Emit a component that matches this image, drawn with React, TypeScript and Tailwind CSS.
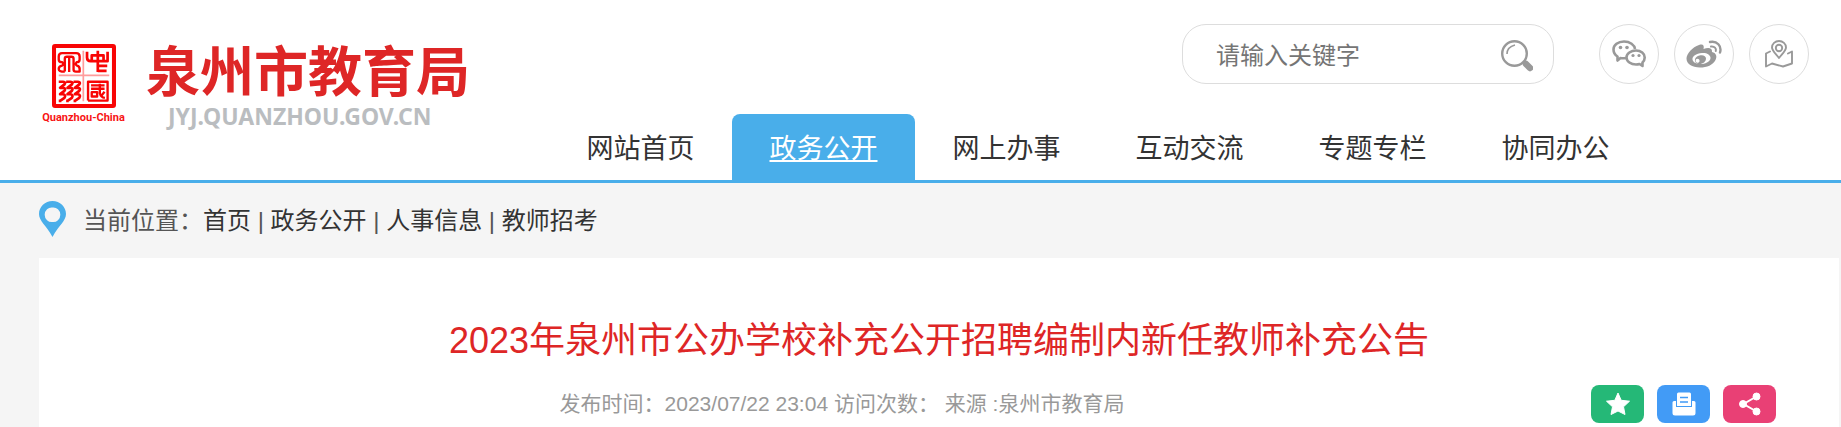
import React from 'react';

const NAV_ITEMS = ['网站首页', '政务公开', '网上办事', '互动交流', '专题专栏', '协同办公'];
const ACTIVE_ITEM = '政务公开';
const CRUMBS = ['首页', '政务公开', '人事信息', '教师招考'];

const SealIcon = () => (
  <svg viewBox="0 0 190 190" className="w-16 h-16" fill="none" stroke="#f80505" strokeWidth="8" strokeLinejoin="round" aria-hidden="true">
    <rect x="6" y="6" width="178" height="178" rx="3" strokeWidth="12" />
    <path d="M93 20v150M20 93h150" stroke="#ff9c9c" strokeWidth="5" />
    {/* 泉 */}
    <path d="M20 46V37Q20 27 30 27H72Q82 27 82 37V46M38 82V44Q38 38 44 38H58Q64 38 64 44V76Q64 82 71 82H82V72M51 38V83M20 46Q20 54 30 54Q36 60 30 64Q20 66 20 74Q20 82 38 82M82 46Q82 54 73 54Q68 60 74 64Q82 66 82 74" strokeWidth="7" />
    {/* 中 */}
    <path d="M104 23V40Q104 51 115 51H165V23M118 51V34H153V51M136 20V83M136 65H164M136 80H162" />
    {/* 州 */}
    <path d="M20 112H33Q42 113 37 120L24 130H34Q42 132 37 139L24 149H34Q42 152 37 160L24 169M42 112H55Q64 113 59 120L46 130H56Q64 132 59 139L46 149H56Q64 152 59 160L46 169M64 112H77Q86 113 81 120L68 130H78Q86 132 81 139L68 149H78Q86 152 81 160L68 169M20 169H28M42 169H50M64 169H72" />
    {/* 國 */}
    <path d="M107 168V112H165V168H107M116 123H156M116 133H156M118 143H134V156H118ZM142 118V146Q145 158 157 160M156 142L144 157" strokeWidth="7" />
  </svg>
);

const SearchIcon = () => (
  <svg viewBox="0 0 32 32" className="w-8 h-8" fill="none" stroke="#999" aria-hidden="true">
    <circle cx="13.5" cy="13.5" r="12.3" strokeWidth="2.4" />
    <path d="M6 14Q6 7 14 5" strokeWidth="1.6" />
    <path d="M22 22l2 2" strokeWidth="3" />
    <path d="M25 24l4 4" strokeWidth="6.5" strokeLinecap="round" />
  </svg>
);

const WechatIcon = () => (
  <svg viewBox="0 0 34 28" className="w-[34px] h-7" fill="none" stroke="#999" strokeWidth="2.6" strokeLinejoin="round" aria-hidden="true">
    <path d="M14 18Q10 18.500 8.500 18L5.500 20.500V16.500Q1.500 14 1.500 9.500C1.500 5 6 1.500 12 1.500S22.500 5 23 9" />
    <path d="M30.500 22.500Q32.700 20.500 32.700 17.500C32.700 13.500 29 10.500 24 10.500S14.500 13.500 14.500 17.500S19 24.500 24 24.500Q26 24.500 27.500 24L30.500 26Z" />
    <g fill="#999" stroke="none">
      <circle cx="8.500" cy="7.500" r="1.800" />
      <circle cx="15" cy="7.500" r="1.800" />
      <circle cx="21" cy="15.500" r="1.600" />
      <circle cx="27" cy="15.500" r="1.600" />
    </g>
  </svg>
);

const WeiboIcon = () => (
  <svg viewBox="0 0 36 28" className="w-9 h-7" aria-hidden="true">
    <path fill="#999" fillRule="evenodd" d="M13 5C17 3.500 18.500 5.500 17.500 9C22 7.500 26.500 7.500 26 12C30 13 31.500 16 29.500 20C27 25 21 27.500 14 27.500C6 27.500 0.500 24 0.500 18.500C0.500 14 6.500 7 13 5ZM16 13C10 13.500 6 16.500 6.500 19.500C7 22.500 11 24.500 16 24C21 23.500 25 20.500 24.500 17.500C24 14.500 20.500 12.500 16 13Z" />
    <path fill="#999" fillRule="evenodd" d="M13.500 15.500C17 14.500 20 16 20 18.500C20 21.500 17 24 13.500 24C10.500 24 8.500 22 9 19.500C9.400 17.500 11 16 13.500 15.500ZM12.500 19A2 2 0 1 0 12.600 22.500A2 2 0 0 0 12.500 19Z" />
    <path fill="none" stroke="#999" strokeWidth="2.400" strokeLinecap="round" d="M24 2C31 0.500 36 6 34 12.500" />
    <path fill="none" stroke="#999" strokeWidth="2" strokeLinecap="round" d="M25 6.500C28.500 6 30.500 8.500 29.800 11" />
  </svg>
);

const MapIcon = () => (
  <svg viewBox="0 0 28 28" className="w-7 h-7" fill="none" stroke="#999" strokeWidth="1.900" strokeLinejoin="round" strokeLinecap="round" aria-hidden="true">
    <path d="M14 18C10 13 7 10.500 7 7.500A7 6.500 0 0 1 21 7.500C21 10.500 18 13 14 18Z" />
    <circle cx="14" cy="8" r="3.200" />
    <path d="M5 11.500L1 13.500V26.500L7 23.500L18 26.500L27 23.500V11.500L23 13.500" />
  </svg>
);

const PinIcon = () => (
  <svg viewBox="0 0 27 36" className="w-[27px] h-9" aria-hidden="true">
    <path fill="#49aeea" fillRule="evenodd" d="M13.500 0C6 0 0 5.800 0 13C0 20 7 24 13.500 36C20 24 27 20 27 13C27 5.800 21 0 13.500 0ZM13.500 6.500A7 7.300 0 1 1 13.500 21A7 7.300 0 1 1 13.500 6.500Z" />
  </svg>
);

const StarIcon = () => (
  <svg viewBox="0 0 24 24" className="w-6 h-6" fill="#fff" stroke="#fff" strokeLinejoin="round" aria-hidden="true">
    <path d="M12 1L15.200 8.300L23.500 9.200L17.500 14.800L19 22.500L12 19L5 22.500L6.500 14.800L0.500 9.200L8.800 8.300Z" />
  </svg>
);

const PrintIcon = () => (
  <svg viewBox="0 0 24 24" className="w-6 h-6" aria-hidden="true">
    <path fill="#fff" d="M2 9H4V15H20V9H22Q23.500 9 23.500 10.500V21Q23.500 23.500 21 23.500H3Q0.500 23.500 0.500 21V10.500Q0.500 9 2 9Z" />
    <path fill="#fff" d="M6.500 0.500H17.500Q19 0.500 19 2V14H5V2Q5 0.500 6.500 0.500Z" />
    <path stroke="#429bf6" strokeWidth="1.500" d="M8 5.500H16M8 10H16" />
  </svg>
);

const ShareIcon = () => (
  <svg viewBox="0 0 24 24" className="w-6 h-6" fill="#fff" stroke="#fff" aria-hidden="true">
    <path d="M18.500 4.500L5.500 12L18.500 19.500" fill="none" strokeWidth="2" />
    <circle cx="18.500" cy="4.500" r="3.500" />
    <circle cx="5" cy="12" r="3.500" />
    <circle cx="18.500" cy="19.500" r="3.500" />
  </svg>
);

const CIRCLE = 'w-15 h-15 flex items-center justify-center rounded-full border border-[#ddd]';
const TOOL = 'w-[53px] h-[38px] flex items-center justify-center rounded-lg';

export default function App() {
  return (
    <div lang="zh-CN" className="min-h-screen flex flex-col bg-[#f5f5f5] text-[#333] font-['Liberation_Sans','Noto_Sans_CJK_SC',sans-serif]">
      {/* Header */}
      <header className="flex bg-white border-b-3 border-[#49aeea]">
        <a href="#" className="w-[549px] shrink-0 flex items-start gap-5 pl-[41px] pt-11">
          <span className="w-[85px] flex flex-col items-center">
            <SealIcon />
            <span className="text-[11px] leading-5 font-bold text-[#f81515] whitespace-nowrap font-['Roboto',sans-serif]">Quanzhou-China</span>
          </span>
          <span className="w-[324px] flex flex-col">
            <span className="text-[54px] leading-[58px] font-bold text-[#de2626] whitespace-nowrap">泉州市教育局</span>
            <span className="pl-[22px] text-[23px] leading-7 font-bold text-[#babdc0] whitespace-nowrap font-['Noto_Sans',sans-serif]">JYJ.QUANZHOU.GOV.CN</span>
          </span>
        </a>

        <div className="flex-1 flex flex-col">
          <div className="flex justify-end gap-[45px] pt-6 pr-8">
            <form className="w-[372px] h-15 flex items-center pl-[33px] pr-5 border border-[#ddd] rounded-3xl">
              <input type="text" aria-label="请输入关键字" placeholder="请输入关键字" className="flex-1 min-w-0 pt-1 text-2xl outline-none placeholder:text-[#757575]" />
              <button type="button" aria-label="搜索" className="pt-1"><SearchIcon /></button>
            </form>
            <div className="flex gap-[15px]">
              <a href="#" aria-label="微信" className={CIRCLE}><WechatIcon /></a>
              <a href="#" aria-label="微博" className={CIRCLE}><WeiboIcon /></a>
              <a href="#" aria-label="地图" className={CIRCLE}><MapIcon /></a>
            </div>
          </div>
          <nav className="flex mt-[30px]">
            {NAV_ITEMS.map((item) => (
              <a
                key={item}
                href="#"
                className={`w-[183px] h-[66px] flex items-center justify-center pt-1 text-[27px] whitespace-nowrap rounded-t-lg ${
                  item === ACTIVE_ITEM ? 'bg-[#49aeea] text-white underline' : ''
                }`}
              >
                {item}
              </a>
            ))}
          </nav>
        </div>
      </header>

      {/* Breadcrumb */}
      <div className="h-[75px] flex items-start pt-[18px] pl-[39px] text-2xl text-[#555]">
        <PinIcon />
        <p className="pl-[17px] leading-10 whitespace-nowrap">
          当前位置：
          {CRUMBS.map((crumb, i) => (
            <React.Fragment key={crumb}>
              {i > 0 && ' | '}
              <a href="#" className="text-[#333]">{crumb}</a>
            </React.Fragment>
          ))}
        </p>
      </div>

      {/* Article */}
      <main className="flex-1 ml-[39px] mr-0.5 pt-[59px] bg-white">
        <h1 className="text-4xl leading-12 text-center text-[#de2626]">2023年泉州市公办学校补充公开招聘编制内新任教师补充公告</h1>
        <div className="flex items-center pt-5 pl-[54px] pr-[63px]">
          <p className="flex-1 text-center text-[21px] text-[#999]">发布时间：2023/07/22 23:04 访问次数： 来源 :泉州市教育局</p>
          <div className="flex gap-[13px]">
            <button type="button" aria-label="收藏" className={`${TOOL} bg-[#25b877]`}><StarIcon /></button>
            <button type="button" aria-label="打印" className={`${TOOL} bg-[#429bf6]`}><PrintIcon /></button>
            <button type="button" aria-label="分享" className={`${TOOL} bg-[#e94075]`}><ShareIcon /></button>
          </div>
        </div>
      </main>
    </div>
  );
}
